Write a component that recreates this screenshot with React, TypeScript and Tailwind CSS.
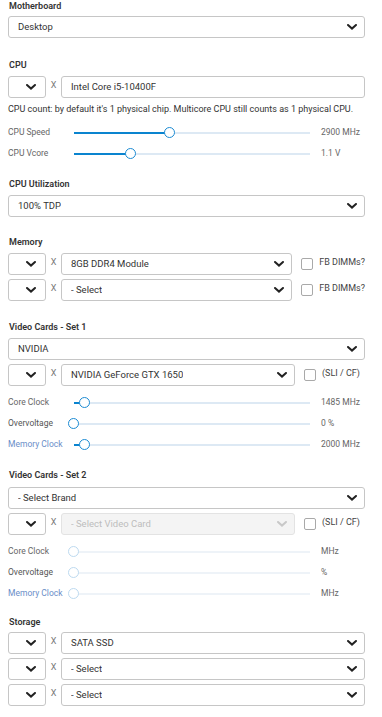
import React from "react";

const Chevron = ({ muted = false }: { muted?: boolean }) => (
  <svg width="10" height="6" viewBox="0 0 10 6" className="shrink-0">
    <path d="M1 1l4 3.6L9 1" fill="none" stroke={muted ? "#c8c8c8" : "#222"} strokeWidth="2" strokeLinecap="round" />
  </svg>
);

const Label = ({ children, className = "" }: { children: React.ReactNode; className?: string }) => (
  <div className={`h-3 leading-3 pl-px text-[9px] font-semibold text-[#333] ${className}`}>{children}</div>
);

const Select = ({
  value,
  disabled = false,
  input = false,
  className = "",
}: {
  value: string;
  disabled?: boolean;
  input?: boolean;
  className?: string;
}) => (
  <div
    className={`h-[22px] flex items-center justify-between rounded-[3px] border pl-[9px] pr-[7px] text-[9.5px] ${
      disabled ? "border-[#e3e3e3] bg-[#f4f4f4] text-[#bdbdbd]" : "border-[#c6c6c6] bg-white text-[#333]"
    } ${className}`}
  >
    <span className="truncate">{value}</span>
    {!input && <Chevron muted={disabled} />}
  </div>
);

const Qty = () => (
  <div className="h-[22px] w-[38px] shrink-0 flex items-center justify-end rounded-[3px] border border-[#c6c6c6] bg-white pr-[9px]">
    <Chevron />
  </div>
);

const Times = () => <div className="w-[15px] shrink-0 text-center text-[9px] text-[#777] -mt-[3px]">X</div>;

const Check = ({ text }: { text: string }) => (
  <div className="flex items-center shrink-0 ml-[9px] gap-[6px]">
    <div className="w-[12px] h-[12px] rounded-[2px] border border-[#a9a9a9] bg-white" />
    <span className="text-[9px] text-[#444] -mt-[2px]">{text}</span>
  </div>
);

const Row = ({
  value,
  check,
  disabled = false,
  narrow = false,
  input = false,
}: {
  value: string;
  check?: string;
  disabled?: boolean;
  narrow?: boolean;
  input?: boolean;
}) => (
  <div className="flex items-center">
    <Qty />
    <Times />
    {narrow ? (
      <Select value={value} disabled={disabled} className="w-[234px]" />
    ) : (
      <Select value={value} input={input} className="flex-1" />
    )}
    {check && <Check text={check} />}
  </div>
);

const Slider = ({
  label,
  value,
  pos,
  labelColor = "text-[#666]",
  disabled = false,
}: {
  label: string;
  value: string;
  pos: number;
  labelColor?: string;
  disabled?: boolean;
}) => (
  <div className="h-[21px] flex items-center text-[8.5px]">
    <div className={`w-[60px] shrink-0 ${labelColor}`}>{label}</div>
    <div className="relative w-[242px] h-[11px] shrink-0">
      <div className={`absolute left-[6px] right-0 top-[4.5px] h-[2px] ${disabled ? "bg-[#eef3f8]" : "bg-[#dde9f4]"}`} />
      {!disabled && pos > 5 && (
        <div className="absolute left-[6px] top-[4.5px] h-[2px] bg-[#0a84cf]" style={{ width: pos - 6 }} />
      )}
      <div
        className={`absolute top-0 w-[11px] h-[11px] rounded-full bg-white border ${
          disabled ? "border-[#bddaf0]" : "border-[#1c8bd3]"
        }`}
        style={{ left: pos - 5.5 }}
      />
    </div>
    <div className="ml-[11px] text-[#666]">{value}</div>
  </div>
);

export default function App() {
  return (
    <div className="w-[382px] bg-white pl-2 pr-[17px] pt-0 pb-2" style={{ fontFamily: "Roboto, 'Noto Sans', sans-serif" }}>
      <Label>Motherboard</Label>
      <Select value="Desktop" className="mt-1" />

      <Label className="mt-[21px]">CPU</Label>
      <div className="mt-[5px]">
        <Row value="Intel Core i5-10400F" input />
      </div>
      <div className="mt-[5px] text-[9px] text-[#333] leading-3">
        CPU count: by default it's 1 physical chip. Multicore CPU still counts as 1 physical CPU.
      </div>
      <div className="mt-[7px]">
        <Slider label="CPU Speed" value="2900 MHz" pos={101} />
        <Slider label="CPU Vcore" value="1.1 V" pos={62} />
      </div>

      <Label className="mt-[14px]">CPU Utilization</Label>
      <Select value="100% TDP" className="mt-[5px]" />

      <Label className="mt-[19px]">Memory</Label>
      <div className="mt-[5px] flex flex-col gap-[4px]">
        <Row value="8GB DDR4 Module" check="FB DIMMs?" narrow />
        <Row value="- Select" check="FB DIMMs?" narrow />
      </div>

      <Label className="mt-[20px]">Video Cards - Set 1</Label>
      <Select value="NVIDIA" className="mt-[5px]" />
      <div className="mt-[4px]">
        <Row value="NVIDIA GeForce GTX 1650" check="(SLI / CF)" narrow />
      </div>
      <div className="mt-[6px]">
        <Slider label="Core Clock" value="1485 MHz" pos={16} />
        <Slider label="Overvoltage" value="0 %" pos={5} labelColor="text-[#555]" />
        <Slider label="Memory Clock" value="2000 MHz" pos={16} labelColor="text-[#6a8ec8]" />
      </div>

      <Label className="mt-[14px]">Video Cards - Set 2</Label>
      <Select value="- Select Brand" className="mt-[6px]" />
      <div className="mt-[4px]">
        <Row value="- Select Video Card" check="(SLI / CF)" narrow disabled />
      </div>
      <div className="mt-[6px]">
        <Slider label="Core Clock" value="MHz" pos={5} disabled />
        <Slider label="Overvoltage" value="%" pos={5} labelColor="text-[#555]" disabled />
        <Slider label="Memory Clock" value="MHz" pos={5} labelColor="text-[#6a8ec8]" disabled />
      </div>

      <Label className="mt-[12px]">Storage</Label>
      <div className="mt-[4px] flex flex-col gap-[4px]">
        <Row value="SATA SSD" />
        <Row value="- Select" />
        <Row value="- Select" />
      </div>
    </div>
  );
}
